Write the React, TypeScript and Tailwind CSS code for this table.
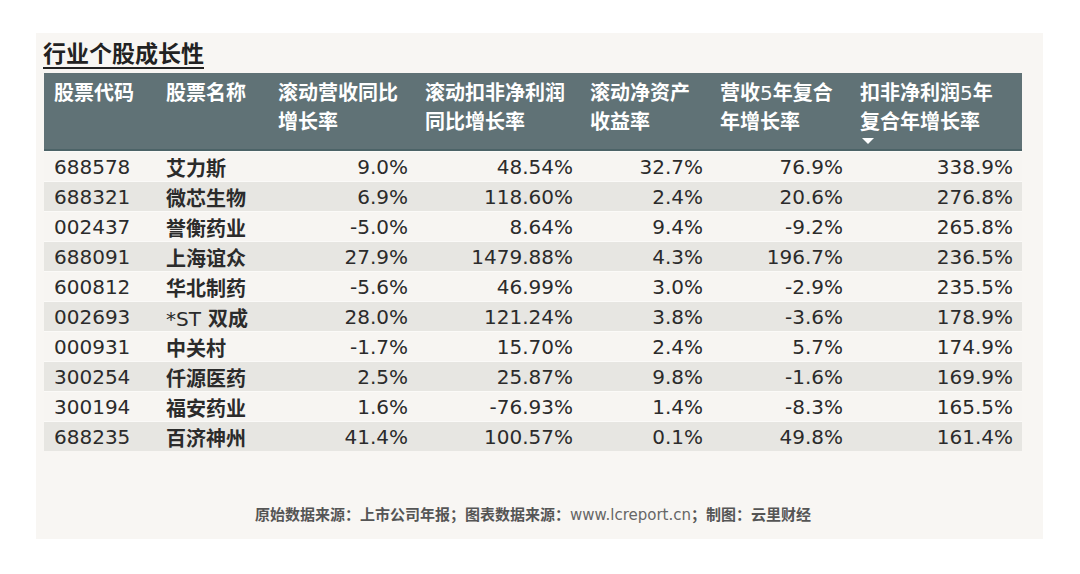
const headers = [
  ['股票代码'],
  ['股票名称'],
  ['滚动营收同比', '增长率'],
  ['滚动扣非净利润', '同比增长率'],
  ['滚动净资产', '收益率'],
  ['营收5年复合', '年增长率'],
  ['扣非净利润5年', '复合年增长率'],
];

const rows = [
  ['688578', '艾力斯', '9.0%', '48.54%', '32.7%', '76.9%', '338.9%'],
  ['688321', '微芯生物', '6.9%', '118.60%', '2.4%', '20.6%', '276.8%'],
  ['002437', '誉衡药业', '-5.0%', '8.64%', '9.4%', '-9.2%', '265.8%'],
  ['688091', '上海谊众', '27.9%', '1479.88%', '4.3%', '196.7%', '236.5%'],
  ['600812', '华北制药', '-5.6%', '46.99%', '3.0%', '-2.9%', '235.5%'],
  ['002693', '*ST 双成', '28.0%', '121.24%', '3.8%', '-3.6%', '178.9%'],
  ['000931', '中关村', '-1.7%', '15.70%', '2.4%', '5.7%', '174.9%'],
  ['300254', '仟源医药', '2.5%', '25.87%', '9.8%', '-1.6%', '169.9%'],
  ['300194', '福安药业', '1.6%', '-76.93%', '1.4%', '-8.3%', '165.5%'],
  ['688235', '百济神州', '41.4%', '100.57%', '0.1%', '49.8%', '161.4%'],
];

// right padding of the numeric columns, measured from the screenshot
const numPad = ['pr-[7px]', 'pr-[7px]', 'pr-[7px]', 'pr-[7px]', 'pr-[9px]'];

const cjk = { fontFamily: '"DejaVu Sans", "Noto Sans CJK SC", sans-serif' };

// latin bits (digits, *ST) stay regular weight, chinese is bold
function Mixed({ text }: { text: string }) {
  const parts = text.split(/([A-Za-z0-9*]+)/).filter(Boolean);
  return (
    <>
      {parts.map((p, i) =>
        /[A-Za-z0-9*]/.test(p) ? (
          <span key={i} className="font-normal">{p}</span>
        ) : (
          <span key={i} className="font-bold">{p}</span>
        )
      )}
    </>
  );
}

export default function App() {
  return (
    <div className="w-[1080px] h-[574px] bg-white pt-[33px] pl-[36px]" style={cjk}>
      <div className="w-[1007px] h-[506px] bg-[#f8f6f3] pl-[8px] pt-[4px]">
        <h1
          className="-ml-[1px] text-[23px] leading-[30px] font-bold text-[#222] underline underline-offset-[5px] decoration-[1.5px]"
          style={{ fontFamily: '"Noto Sans CJK SC", sans-serif' }}
        >
          行业个股成长性
        </h1>

        <div className="mt-[6px] w-[978px]">
          <div className="grid grid-cols-[112px_112px_147px_165px_130px_140px_172px] h-[78px] bg-[#607276] border-b-2 border-[#4c6367] text-white">
            {headers.map((h, i) => (
              <div key={i} className="pl-[10px] pt-[6px] text-[20px] leading-[29px]">
                {h.map((line) => (
                  <div key={line}>
                    <Mixed text={line} />
                  </div>
                ))}
                {i === 6 && (
                  <div className="ml-[2px] mt-[1px] w-0 h-0 border-l-[6px] border-r-[6px] border-t-[6px] border-l-transparent border-r-transparent border-t-white" />
                )}
              </div>
            ))}
          </div>

          {rows.map((r, ri) => (
            <div
              key={r[0]}
              className={`grid grid-cols-[112px_112px_147px_165px_130px_140px_172px] h-[30px] text-[20px] leading-[30px] text-[#2b2b2b] border-t border-[#fbfaf8] ${
                ri % 2 === 1 ? 'bg-[#e7e6e2]' : 'bg-[#f7f5f2]'
              }`}
            >
              <div className="pl-[10px]">{r[0]}</div>
              <div className="pl-[10px] pt-[2px] whitespace-nowrap">
                <Mixed text={r[1]} />
              </div>
              {r.slice(2).map((v, ci) => (
                <div key={ci} className={`text-right ${numPad[ci]}`}>
                  {v}
                </div>
              ))}
            </div>
          ))}
        </div>

        <p
          className="mt-[53px] w-[978px] text-center text-[15px] leading-[20px] font-bold text-[#555]"
          style={{ fontFamily: '"Noto Sans CJK SC", sans-serif' }}
        >
          原始数据来源：上市公司年报；图表数据来源：
          <span className="font-normal text-[#666]" style={{ fontFamily: '"DejaVu Sans", sans-serif' }}>
            www.lcreport.cn
          </span>
          ；制图：云里财经
        </p>
      </div>
    </div>
  );
}
